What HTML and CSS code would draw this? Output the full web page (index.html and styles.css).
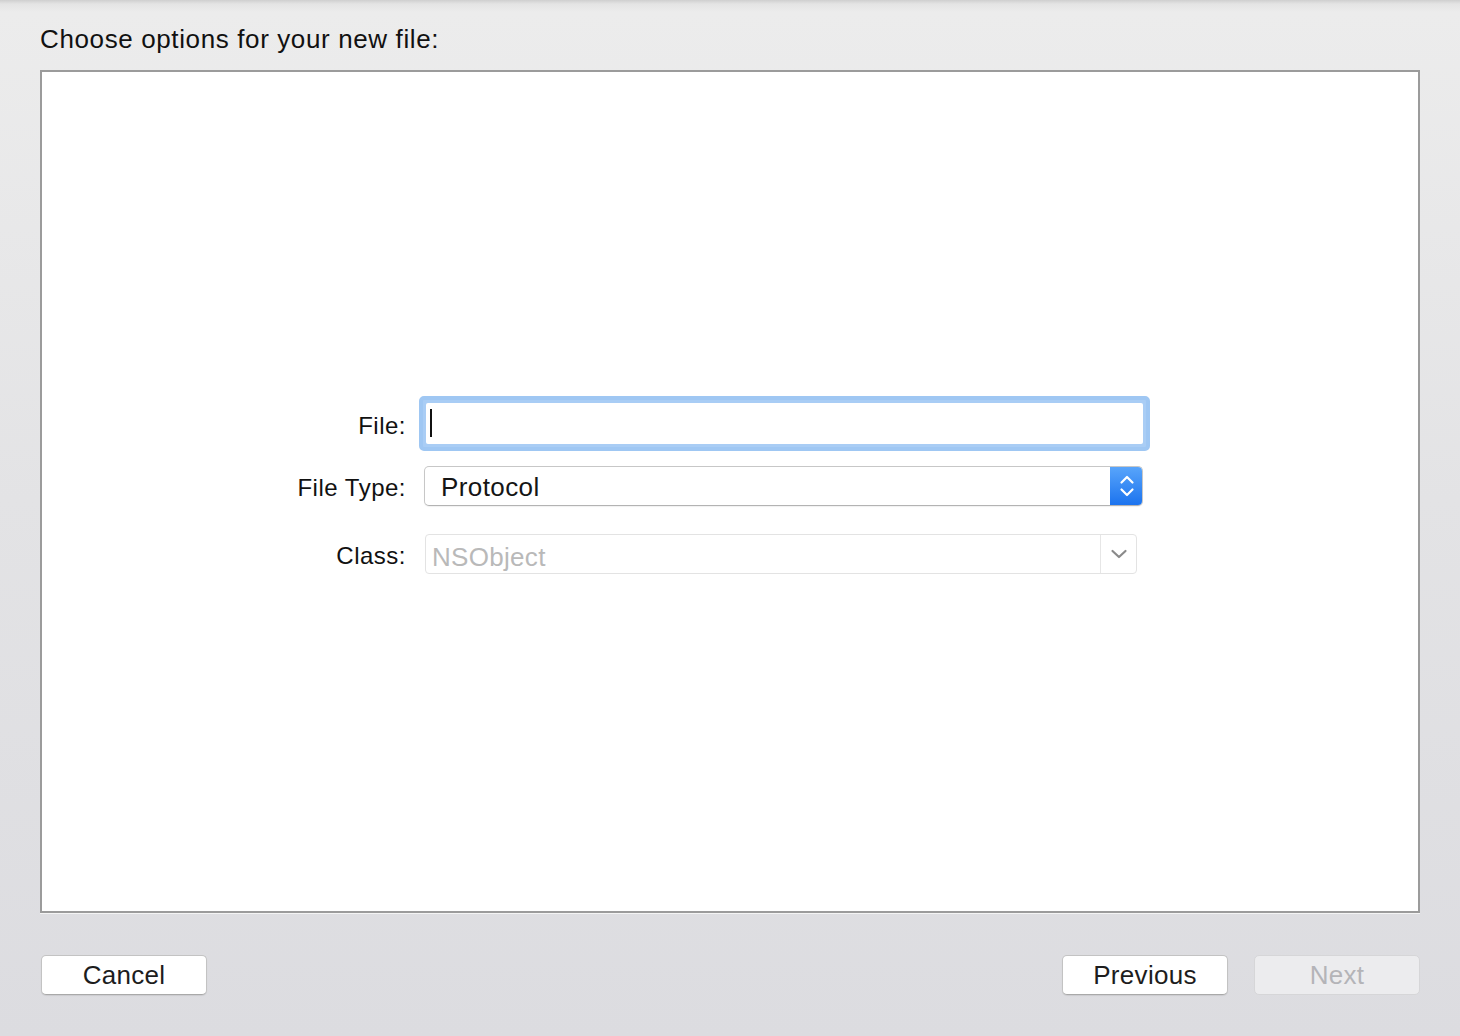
FILE: index.html
```html
<!DOCTYPE html>
<html lang="en">
<head>
  <meta charset="UTF-8">
  <title>Choose options for your new file</title>
  <link rel="stylesheet" href="styles.css">
</head>
<body>
  <div class="sheet">
    <h1 class="title">Choose options for your new file:</h1>
    <!-- Options panel -->
    <div class="panel">
      <div class="form">
        <div class="row row-file">
          <label class="label">File:</label>
          <div class="focus-ring">
            <div class="text-field"><span class="caret"></span></div>
          </div>
        </div>
        <div class="row row-type">
          <label class="label">File Type:</label>
          <div class="popup">
            <span class="popup-value">Protocol</span>
            <span class="stepper">
              <svg width="18" height="30" viewBox="0 0 18 30">
                <path d="M3.5 11.5 L9 6 L14.5 11.5" fill="none" stroke="#fff" stroke-width="2.2" stroke-linecap="round" stroke-linejoin="round"/>
                <path d="M3.5 18.5 L9 24 L14.5 18.5" fill="none" stroke="#fff" stroke-width="2.2" stroke-linecap="round" stroke-linejoin="round"/>
              </svg>
            </span>
          </div>
        </div>
        <div class="row row-class">
          <label class="label">Class:</label>
          <div class="combo">
            <span class="combo-value">NSObject</span>
            <span class="combo-arrow">
              <svg width="18" height="12" viewBox="0 0 18 12">
                <path d="M2.5 3 L9 9 L15.5 3" fill="none" stroke="#8a8a8a" stroke-width="2.2" stroke-linecap="round" stroke-linejoin="round"/>
              </svg>
            </span>
          </div>
        </div>
      </div>
    </div>
    <!-- Bottom buttons -->
    <div class="footer">
      <button class="btn">Cancel</button>
      <div class="footer-right">
        <button class="btn">Previous</button>
        <button class="btn btn-disabled">Next</button>
      </div>
    </div>
  </div>
</body>
</html>
```

FILE: styles.css
```css
/* Page */
html, body {
  margin: 0;
  height: 100%;
}
body {
  background: linear-gradient(to bottom, #cfcfcf 0px, #e4e4e4 4px, #ececec 12px, #e3e3e5 500px, #dcdce0 100%);
  font-family: "Liberation Sans", Arial, sans-serif;
  color: #1d1d1d;
}
.sheet {
  padding: 22px 40px 0 40px;
  display: flex;
  flex-direction: column;
}
.title {
  margin: 0;
  font-size: 26px;
  letter-spacing: 0.62px;
  font-weight: normal;
  line-height: 34px;
  height: 48px;
  color: #111;
}
/* White panel */
.panel {
  height: 839px;
  background: #fff;
  border: 2px solid #9b9b9b;
  box-shadow: 0 1px 0 #f4f4f4;
  display: flex;
  align-items: center;
  padding-left: 10px;
}
.form {
  display: flex;
  flex-direction: column;
  margin-top: -14px;
}
.row {
  display: flex;
  align-items: center;
}
.label {
  width: 366px;
  text-align: right;
  font-size: 24px;
  letter-spacing: 0.5px;
  color: #111;
  padding-right: 12px;
  padding-top: 5px;
  box-sizing: border-box;
}
/* File text field */
.focus-ring {
  width: 731px;
  height: 55px;
  box-sizing: border-box;
  border: 4px solid #9fc7f3;
  border-radius: 5px;
  padding: 3px;
  background: #a9cdf5;
  margin-left: 1px;
}
.text-field {
  height: 100%;
  background: #fff;
  border-radius: 2px;
  display: flex;
  align-items: center;
  padding-left: 4px;
}
.caret {
  width: 2px;
  height: 28px;
  background: #111;
}
/* Popup button */
.row-type {
  margin-top: 15px;
}
.popup {
  width: 719px;
  height: 40px;
  margin-left: 6px;
  box-sizing: border-box;
  border: 1px solid #c7c7c7;
  border-bottom-color: #b3b3b3;
  border-radius: 5px;
  background: #fff;
  display: flex;
  align-items: center;
  overflow: hidden;
  box-shadow: 0 1px 1px rgba(0, 0, 0, 0.06);
}
.popup-value {
  flex: 1;
  font-size: 26px;
  letter-spacing: 0.4px;
  padding-left: 16px;
  padding-top: 3px;
  color: #151515;
}
.stepper {
  width: 33px;
  height: 40px;
  margin-right: -1px;
  background: linear-gradient(to bottom, #5aa6fb, #1a72ee);
  display: flex;
  align-items: center;
  justify-content: center;
}
/* Combo box */
.row-class {
  margin-top: 28px;
}
.combo {
  width: 712px;
  height: 40px;
  margin-left: 7px;
  box-sizing: border-box;
  border: 1px solid #e3e3e3;
  border-radius: 4px;
  background: #fff;
  display: flex;
  align-items: center;
}
.combo-value {
  flex: 1;
  font-size: 26px;
  letter-spacing: 0.3px;
  padding-left: 6px;
  color: #b9b9b9;
  border-right: 1px solid #e6e6e6;
  height: 100%;
  line-height: 44px;
}
.combo-arrow {
  width: 35px;
  display: flex;
  justify-content: center;
}
/* Footer buttons */
.footer {
  display: flex;
  justify-content: space-between;
  margin-top: 42px;
  padding-left: 1px;
}
.footer-right {
  display: flex;
  gap: 26px;
}
.btn {
  width: 166px;
  height: 40px;
  background: #fff;
  border: 1px solid #c3c3c3;
  border-bottom-color: #a9a9a9;
  border-radius: 5px;
  font-family: "Liberation Sans", Arial, sans-serif;
  font-size: 26px;
  letter-spacing: 0.3px;
  color: #1d1d1d;
  padding: 0;
  box-shadow: 0 1px 1px rgba(0, 0, 0, 0.08);
}
.btn:first-child {
  margin-right: 0;
}
.footer-right .btn:first-child {
  margin-left: -1px;
}
.btn-disabled {
  background: #ececee;
  border-color: #d6d6d8;
  color: #b4b4b8;
  box-shadow: none;
}
```
